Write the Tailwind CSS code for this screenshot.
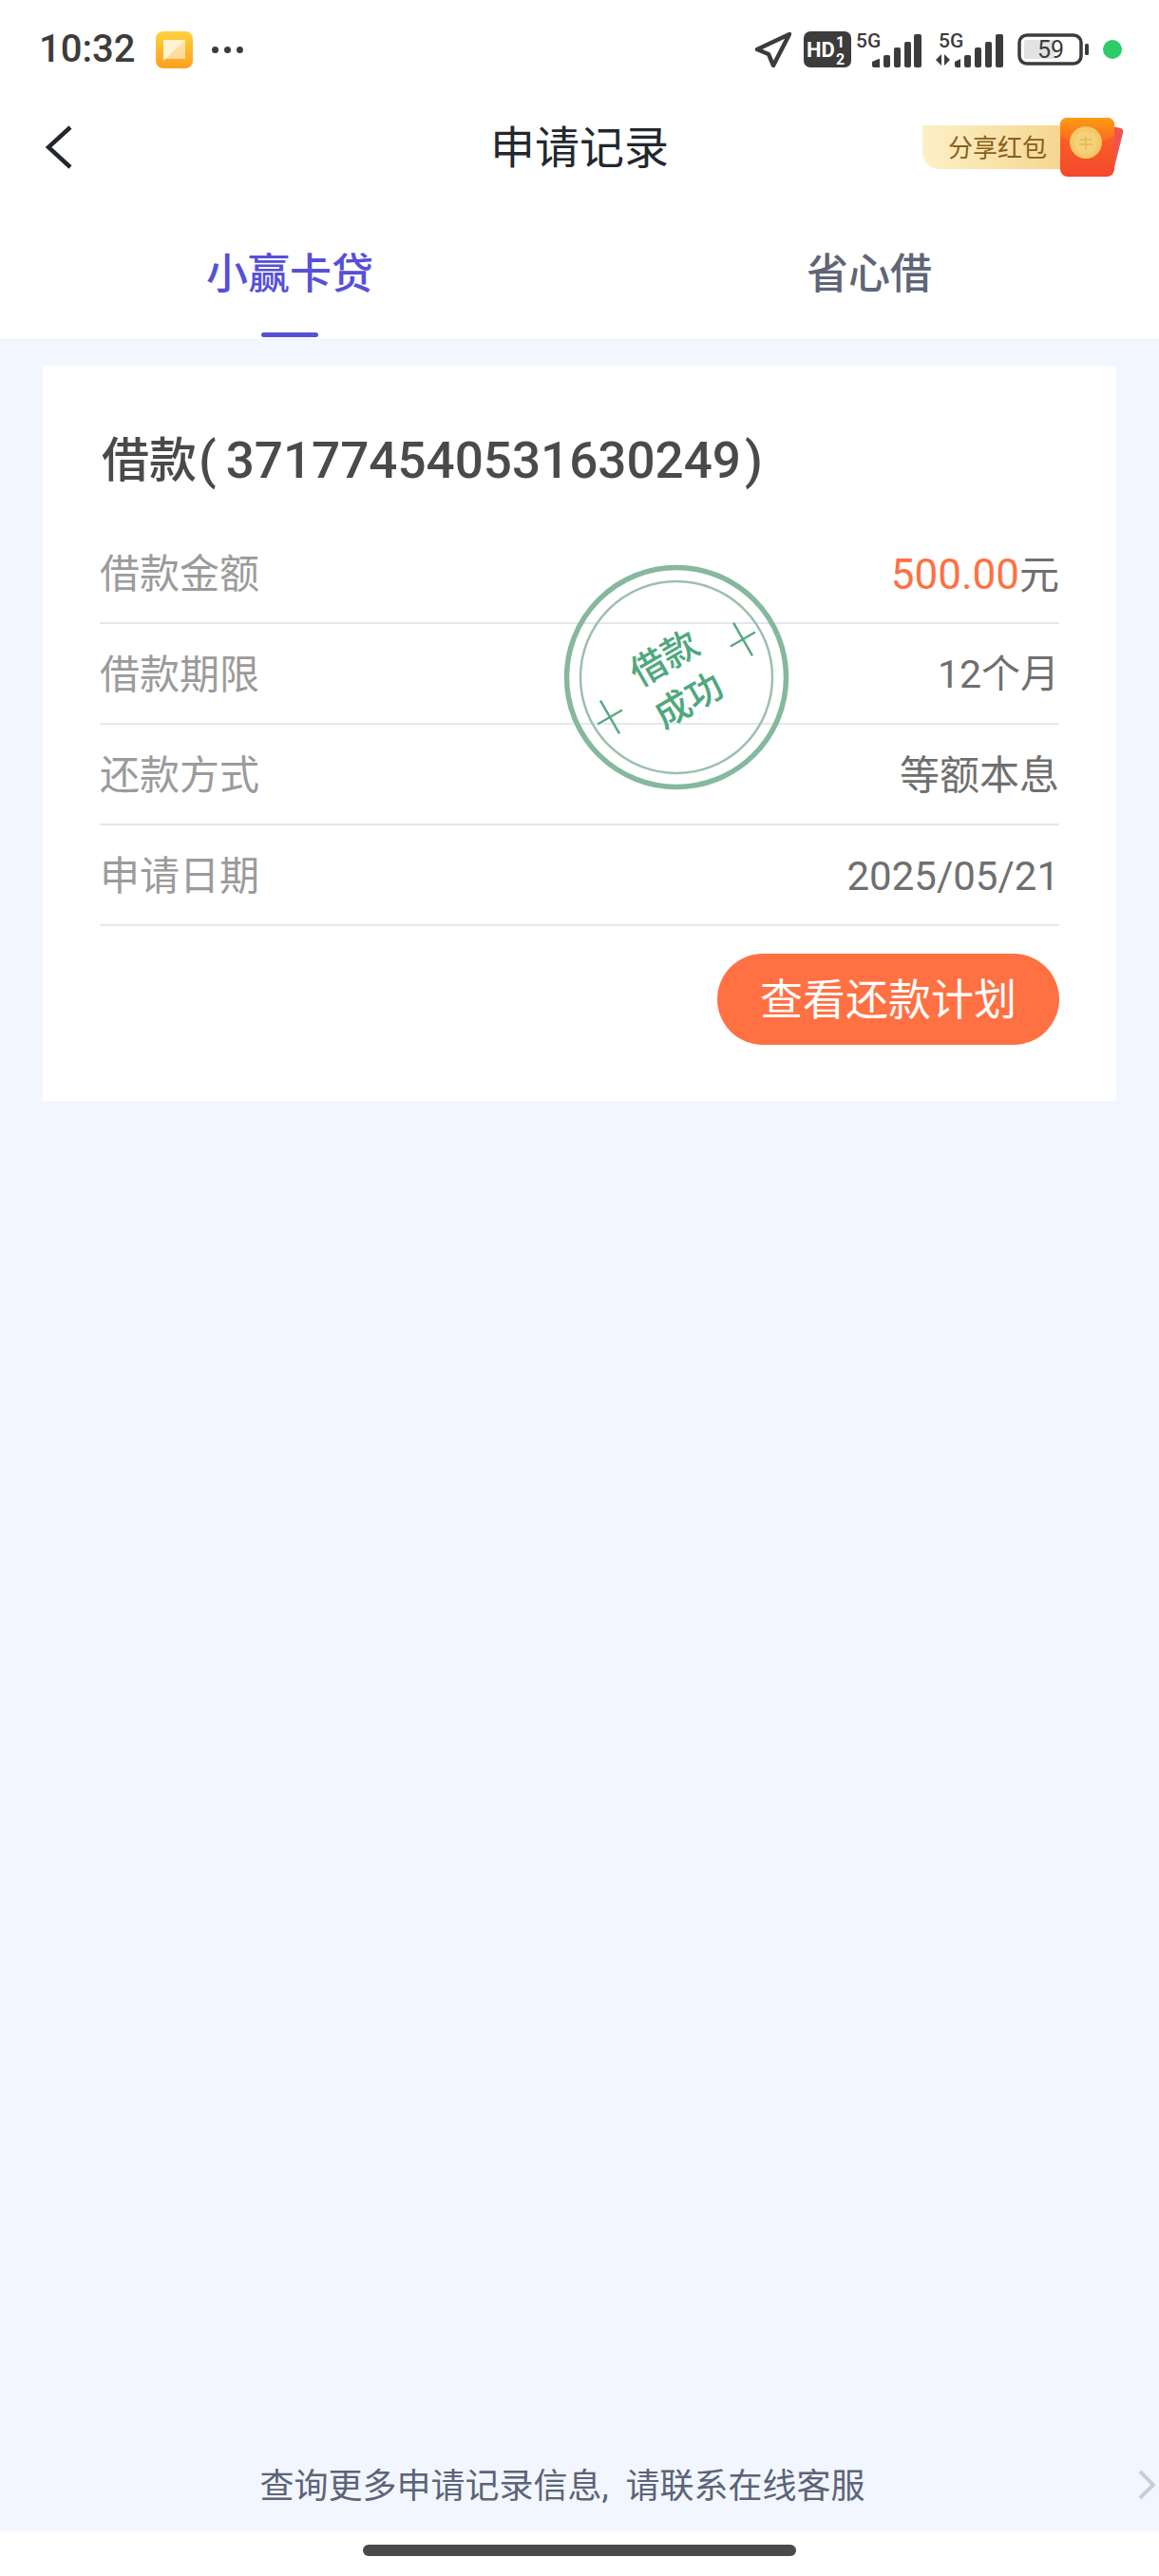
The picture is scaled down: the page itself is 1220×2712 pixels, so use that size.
<!DOCTYPE html>
<html lang="zh-CN">
<head>
    <meta charset="UTF-8">
    <meta name="viewport" content="width=device-width, initial-scale=1.0">
    <title>申请记录</title>
    <script src="https://cdn.jsdelivr.net/npm/@tailwindcss/browser@4"></script>
</head>
<body class="bg-white font-[Roboto,'Noto_Sans_CJK_SC',sans-serif]">
    <div class="w-[1220px] h-[2712px] flex flex-col overflow-hidden">
        <!-- status bar -->
        <div class="h-[104px] flex items-center justify-between pl-[41px] pr-[39px] text-[#3c3c3c]">
            <div class="flex items-center">
                <span class="text-[40px] leading-none font-medium w-[123px]">10:32</span>
                <svg class="w-[39px] h-[39px]" viewBox="0 0 39 39">
                    <defs>
                        <linearGradient id="note" x1="0" y1="0" x2="0" y2="1">
                            <stop offset="0" stop-color="#ffd23f"/>
                            <stop offset="1" stop-color="#ff9f1c"/>
                        </linearGradient>
                    </defs>
                    <rect width="39" height="39" rx="8" fill="url(#note)"/>
                    <path d="M8 9H31V29H8Z" fill="#fff" fill-opacity=".55"/>
                    <path d="M8 9H31L8 31Z" fill="#fff3d2"/>
                </svg>
                <div class="flex gap-[6px] ml-[20px]">
                    <span class="w-[7px] h-[7px] rounded-full bg-[#3c3c3c]"></span>
                    <span class="w-[7px] h-[7px] rounded-full bg-[#3c3c3c]"></span>
                    <span class="w-[7px] h-[7px] rounded-full bg-[#3c3c3c]"></span>
                </div>
            </div>
            <div class="flex items-center">
                <svg class="w-[39px] h-[39px]" viewBox="0 0 39 39" fill="none" stroke="#3c3c3c" stroke-width="4.5" stroke-linejoin="round">
                    <path d="M37 3L3 19L15 24L20 36Z"/>
                </svg>
                <svg class="w-[50px] h-[38px] ml-[13px]" viewBox="0 0 50 38">
                    <rect width="50" height="38" rx="7" fill="#3c3c3c"/>
                    <text x="3" y="27" font-size="22" font-weight="700" fill="#fff">HD</text>
                    <text x="34" y="17" font-size="16" font-weight="700" fill="#fff">1</text>
                    <text x="34" y="35" font-size="16" font-weight="700" fill="#fff">2</text>
                </svg>
                <svg class="w-[70px] h-[42px] -mt-[4px] ml-[5px]" viewBox="0 -4 70 42" fill="#3c3c3c">
                    <text x="0" y="17" font-size="21" font-weight="500">5G</text>
                    <path d="M17 36V32L24 29H25V38H19Q17 38 17 36Z"/>
                    <rect x="29" y="25" width="7" height="13" rx="2"/>
                    <rect x="40" y="17" width="7" height="21" rx="2"/>
                    <rect x="51" y="11" width="7" height="27" rx="2"/>
                    <rect x="61" y="3" width="8" height="35" rx="2"/>
                </svg>
                <svg class="w-[72px] h-[42px] -mt-[4px] ml-[14px]" viewBox="0 -4 72 42" fill="#3c3c3c">
                    <text x="3" y="17" font-size="21" font-weight="500">5G</text>
                    <path d="M6 24V36L0 30ZM9 24L15 30L9 36Z"/>
                    <path d="M20 36V32L26 29V38H22Q20 38 20 36Z"/>
                    <rect x="30" y="25" width="7" height="13" rx="2"/>
                    <rect x="41" y="17" width="7" height="21" rx="2"/>
                    <rect x="52" y="11" width="7" height="27" rx="2"/>
                    <rect x="63" y="3" width="8" height="35" rx="2"/>
                </svg>
                <svg class="w-[75px] h-[34px] ml-[14px]" viewBox="0 0 75 34">
                    <rect x="2" y="2" width="65" height="30" rx="8" fill="none" stroke="#3c3c3c" stroke-width="3.5"/>
                    <rect x="7" y="7" width="32" height="20" rx="2" fill="#e2e2e2"/>
                    <text x="35" y="26" font-size="25" text-anchor="middle" fill="#3c3c3c">59</text>
                    <rect x="71" y="11" width="4" height="12" rx="1.5" fill="#3c3c3c"/>
                </svg>
                <span class="w-[20px] h-[20px] rounded-full bg-[#2ecc67] ml-[15px]"></span>
            </div>
        </div>

        <!-- title bar -->
        <div class="h-[102px] grid grid-cols-[1fr_auto_1fr] items-center">
            <div class="pl-[48px]">
                <svg class="w-[28px] h-[46px]" viewBox="0 0 28 46" fill="none" stroke="#23272e" stroke-width="4.5">
                    <path d="M26 2L3 23L26 44"/>
                </svg>
            </div>
            <h1 class="text-[47px] leading-none text-[#23272e]">申请记录</h1>
            <div class="flex justify-end items-center pr-[37px]">
                <div class="w-[149px] h-[46px] rounded-bl-[18px] bg-gradient-to-r from-[#fdf0c6] to-[#f5d68e] text-[26px] leading-none text-[#8a5f1e] flex items-center pl-[27px] pt-[2px]">分享红包</div>
                <svg class="w-[67px] h-[66px] -ml-[4px]" viewBox="0 0 67 66">
                    <defs>
                        <linearGradient id="envelope" x1="0" y1="0" x2="0" y2="1">
                            <stop offset="0" stop-color="#ff6a2a"/>
                            <stop offset="1" stop-color="#f4472a"/>
                        </linearGradient>
                        <linearGradient id="flap" x1="0" y1="0" x2="0" y2="1">
                            <stop offset="0" stop-color="#ff9b0f"/>
                            <stop offset="1" stop-color="#f8592a"/>
                        </linearGradient>
                    </defs>
                    <path d="M50 10L64 13Q67 14 66 18L56 58Q55 62 52 60Z" fill="#ef5350"/>
                    <rect y="2" width="57" height="62" rx="8" fill="url(#envelope)"/>
                    <path d="M0 21V10Q0 2 8 2H49Q57 2 57 10V21L28 35Z" fill="url(#flap)"/>
                    <circle cx="27" cy="28" r="17" fill="#f8c866"/>
                    <circle cx="27" cy="28" r="12" fill="#f2d27c"/>
                    <path d="M21 25H33M20 30H34M27 22V35" stroke="#e7b850" stroke-width="1.5"/>
                </svg>
            </div>
        </div>

        <!-- tabs -->
        <div class="h-[151px] flex">
            <div class="relative flex-1 flex justify-center items-center pt-[14px]">
                <span class="text-[44px] leading-none font-medium text-[#5650d8]">小赢卡贷</span>
                <span class="absolute bottom-[2px] left-[275px] w-[60px] h-[5px] rounded-full bg-[#5650d8]"></span>
            </div>
            <div class="flex-1 flex justify-center items-center pt-[14px]">
                <span class="text-[44px] leading-none font-medium text-[#5f6577]">省心借</span>
            </div>
        </div>

        <!-- content -->
        <main class="flex-1 flex flex-col bg-[#f2f6fe] border-t border-[#eef1f6] pt-[27px]">
            <section class="relative mx-[45px] h-[774px] bg-white px-[60px]">
                <div class="h-[166px] flex items-center pt-[34px] pl-[2px] text-[#4a4a4a] font-medium">
                    <span class="text-[50px] leading-none">借款</span>
                    <span class="text-[54px] leading-none ml-[2px]">(</span>
                    <span class="text-[53px] leading-none ml-[10px]">371774540531630249</span>
                    <span class="text-[54px] leading-none ml-[4px]">)</span>
                </div>
                <div class="h-[106px] flex items-center justify-between border-b-2 border-[#e3e8ef] pt-[3px]">
                    <span class="text-[42px] leading-none text-[#9b9b9b]">借款金额</span>
                    <span class="text-[42px] leading-none text-[#6f6f6f]"><span class="text-[#ff7043] text-[44px]">500.00</span>元</span>
                </div>
                <div class="h-[106px] flex items-center justify-between border-b-2 border-[#e3e8ef] pt-[3px]">
                    <span class="text-[42px] leading-none text-[#9b9b9b]">借款期限</span>
                    <span class="text-[41px] leading-none text-[#6f6f6f]">12个月</span>
                </div>
                <div class="h-[106px] flex items-center justify-between border-b-2 border-[#e3e8ef] pt-[3px]">
                    <span class="text-[42px] leading-none text-[#9b9b9b]">还款方式</span>
                    <span class="text-[42px] leading-none text-[#6f6f6f]">等额本息</span>
                </div>
                <div class="h-[106px] flex items-center justify-between border-b-2 border-[#e3e8ef] pt-[3px]">
                    <span class="text-[42px] leading-none text-[#9b9b9b]">申请日期</span>
                    <span class="text-[42px] leading-none text-[#6f6f6f]">2025/05/21</span>
                </div>
                <div class="flex justify-end mt-[29px]">
                    <button class="w-[360px] h-[96px] rounded-full bg-[#ff7043] text-white text-[45px] leading-none pt-[2px]">查看还款计划</button>
                </div>

                <!-- stamp -->
                <svg class="absolute left-[547px] top-[208px] w-[240px] h-[240px]" viewBox="0 0 240 240" fill="none">
                    <circle cx="120" cy="120" r="115.5" stroke="#85b89d" stroke-width="5.5"/>
                    <circle cx="120" cy="120" r="101" stroke="#9dbfae" stroke-width="2.5"/>
                    <g transform="rotate(-30 120 120)" fill="#4fa87e" text-anchor="middle" font-size="38" font-weight="500">
                        <text x="119" y="110" stroke="none">借款</text>
                        <text x="119" y="161" stroke="none">成功</text>
                    </g>
                    <g transform="translate(190 80) rotate(-30)" stroke="#5aa883" stroke-width="2.5">
                        <path d="M-15 0H15M0 -20V20"/>
                    </g>
                    <g transform="translate(50 162) rotate(-30)" stroke="#5aa883" stroke-width="2.5">
                        <path d="M-15 0H15M0 -20V20"/>
                    </g>
                </svg>
            </section>

            <div class="relative mt-auto h-[104px] flex justify-center items-center pt-[12px] pr-[36px]">
                <p class="text-[36px] leading-none text-[#5b6478]">查询更多申请记录信息<span class="mr-[9px]">,</span> 请联系在线客服</p>
                <svg class="absolute right-[4px] top-[40px] w-[18px] h-[32px]" viewBox="0 0 18 32" fill="none" stroke="#c8cdd6" stroke-width="4">
                    <path d="M2 2L16 16L2 30"/>
                </svg>
            </div>
        </main>

        <!-- home indicator -->
        <div class="h-[48px] flex justify-center pt-[15px]">
            <span class="w-[456px] h-[12px] rounded-full bg-[#4a4a4a]"></span>
        </div>
    </div>
</body>
</html>
